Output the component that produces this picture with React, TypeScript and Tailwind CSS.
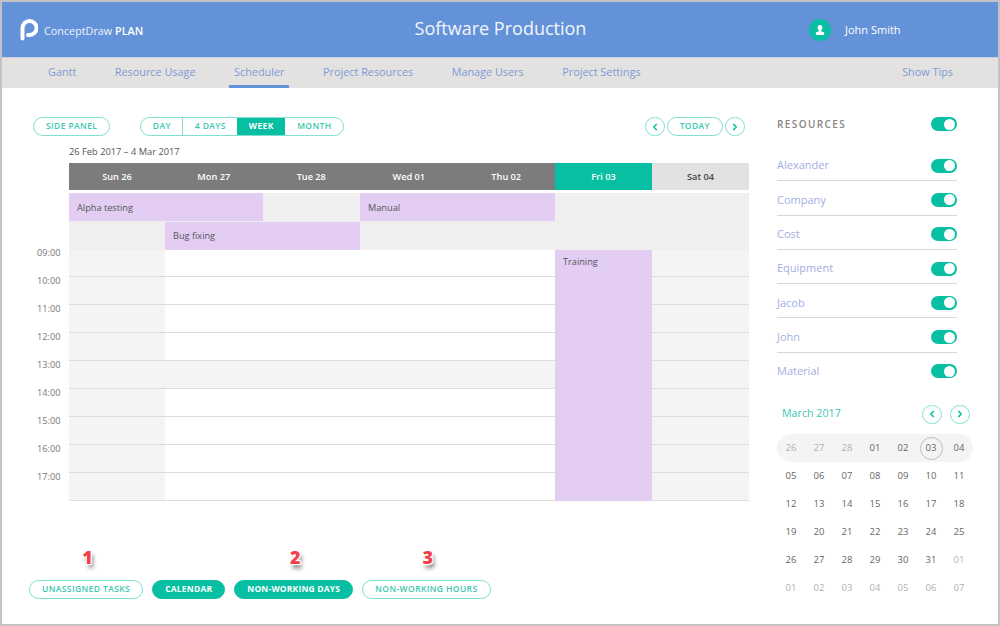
import { ChevronLeft, ChevronRight } from 'lucide-react'

const FONT = "font-['Open_Sans',sans-serif]"

const navItems = ['Gantt', 'Resource Usage', 'Scheduler', 'Project Resources', 'Manage Users', 'Project Settings']
const resources = ['Alexander', 'Company', 'Cost', 'Equipment', 'Jacob', 'John', 'Material']
const hours = ['09:00', '10:00', '11:00', '12:00', '13:00', '14:00', '15:00', '16:00', '17:00']
const days = ['Sun 26', 'Mon 27', 'Tue 28', 'Wed 01', 'Thu 02', 'Fri 03', 'Sat 04']

const calendar = [
  ['26', '27', '28', '01', '02', '03', '04'],
  ['05', '06', '07', '08', '09', '10', '11'],
  ['12', '13', '14', '15', '16', '17', '18'],
  ['19', '20', '21', '22', '23', '24', '25'],
  ['26', '27', '28', '29', '30', '31', '01'],
  ['01', '02', '03', '04', '05', '06', '07'],
]

function isMuted(row: number, col: number) {
  if (row === 0) return col < 3
  if (row === 4) return col === 6
  return row === 5
}

function Toggle() {
  return (
    <div className="flex h-[14px] w-[26px] items-center justify-end rounded-full bg-[#08bfa3] pr-[2px]">
      <div className="h-[11px] w-[11px] rounded-full bg-white" />
    </div>
  )
}

function RoundNav({ left }: { left?: boolean }) {
  return (
    <button className="flex h-[19px] w-[20px] items-center justify-center rounded-full border border-[#7fe0cf] text-[#08bfa3]">
      {left ? <ChevronLeft size={10} strokeWidth={4} /> : <ChevronRight size={10} strokeWidth={4} />}
    </button>
  )
}

function Pill({ label, active, badge }: { label: string; active?: boolean; badge?: string }) {
  return (
    <div className="relative">
      <button
        className={
          active
            ? 'block h-[19px] rounded-full border border-[#08bfa3] bg-[#08bfa3] px-3 text-[8.5px] font-bold tracking-[0.2px] text-white'
            : 'block h-[19px] rounded-full border border-[#7fe0cf] bg-white px-3 text-[8.5px] font-semibold tracking-[0.4px] text-[#3cc8b0]'
        }
      >
        {label}
      </button>
      {badge && (
        <span className="absolute -top-[35px] left-0 right-0 pl-[3px] text-center text-[18px] leading-[24px] font-extrabold text-[#f2404a] [text-shadow:1px_1px_0_#fff,-1px_1px_0_#fff,1px_-1px_0_#fff,-1px_-1px_0_#fff,0_0_3px_#fff,2px_4px_4px_#00000090]">
          {badge}
        </span>
      )}
    </div>
  )
}

function DayColumn({ weekend }: { weekend?: boolean }) {
  return (
    <div className="flex flex-col">
      {hours.map((h, i) => (
        <div
          key={h}
          className={[
            i === 0 ? 'h-[27px]' : 'h-[28px]',
            'border-b border-[#dcdcdc]',
            weekend || h === '13:00' ? 'bg-[#f4f4f4]' : 'bg-white',
          ].join(' ')}
        />
      ))}
    </div>
  )
}

export default function App() {
  return (
    <div className={`${FONT} flex h-[626px] w-[1000px] flex-col overflow-hidden border-2 border-[#c2c2c2] bg-white`}>
      {/* Header */}
      <header className="flex h-[55px] shrink-0 items-center bg-[#6492d8] text-white">
        <div className="flex w-[344px] items-center pl-[18px]">
          <svg width="18" height="22" viewBox="0 0 18 22" fill="none">
            <path d="M2.5 19.5V9a7 7 0 1 1 7 7H8" stroke="white" strokeWidth="4" strokeLinecap="round" />
          </svg>
          <span className="ml-[6px] mt-[3px] text-[10.8px] text-[#eef3fb]">
            ConceptDraw <b className="font-semibold text-white">PLAN</b>
          </span>
        </div>
        <div className="mb-[4px] w-[309px] text-center text-[18px] leading-none text-[#f3f6fc]">Software Production</div>
        <div className="ml-[154px] flex items-center">
          <div className="flex h-[22px] w-[22px] items-center justify-center rounded-full bg-[#08bfa3]">
            <svg width="12" height="12" viewBox="0 0 12 12" fill="white">
              <path d="M6 1a2.4 2.4 0 0 0-2.4 2.4c0 1.3.6 2.2 1.3 2.9v1L1.8 8.4V11h8.4V8.4L7.1 7.3v-1c.7-.7 1.3-1.6 1.3-2.9A2.4 2.4 0 0 0 6 1z" />
            </svg>
          </div>
          <span className="ml-[14px] mt-[2px] text-[11px]">John Smith</span>
        </div>
      </header>

      {/* Nav */}
      <nav className="flex h-[31px] shrink-0 items-stretch border-t border-[#c9d3e2] bg-[#e4e2e1] pl-[41px] pr-[40px] text-[10.85px] text-[#7c9bd6]">
        {navItems.map((item) => (
          <div
            key={item}
            className={
              item === 'Scheduler'
                ? 'mr-[28.5px] flex items-center border-b-[3px] border-[#6492d8] px-[5px] pt-[1px]'
                : 'mr-[28.5px] flex items-center border-b-[3px] border-transparent px-[5px] pt-[1px]'
            }
          >
            {item}
          </div>
        ))}
        <div className="ml-auto flex items-center border-b-[3px] border-transparent px-[5px] pt-[1px]">Show Tips</div>
      </nav>

      <div className="flex min-h-0 flex-1">
        {/* Main */}
        <main className="flex w-[775px] flex-col pl-[31px] pt-[29px]">
          <div className="flex h-[19px] items-center pr-[32px]">
            <Pill label="SIDE PANEL" />
            <div className="ml-[30px] flex h-[19px] items-stretch overflow-hidden rounded-full border border-[#7fe0cf] text-[8.5px] font-semibold tracking-[0.4px] text-[#3cc8b0]">
              <span className="flex w-[42px] items-center justify-center border-r border-[#7fe0cf]">DAY</span>
              <span className="flex w-[54px] items-center justify-center">4 DAYS</span>
              <span className="flex w-[48px] items-center justify-center bg-[#08bfa3] font-bold text-white">WEEK</span>
              <span className="flex w-[58px] items-center justify-center">MONTH</span>
            </div>
            <div className="ml-auto flex items-center gap-[2px]">
              <RoundNav left />
              <Pill label="TODAY" />
              <RoundNav />
            </div>
          </div>

          <div className="ml-[36px] mt-[8px] text-[9.3px] leading-[16px] text-[#555]">26 Feb 2017 – 4 Mar 2017</div>

          <div className="mt-[3px] flex">
            {/* Time labels */}
            <div className="w-[36px] shrink-0 pl-[4px] pt-[86px]">
              {hours.map((h) => (
                <div key={h} className="h-[28px] text-[9.2px] leading-[8px] text-[#777]">
                  {h}
                </div>
              ))}
            </div>

            <div className="w-[680px]">
              {/* Day header */}
              <div className="grid h-[27px] grid-cols-[96px_97.5px_97.5px_97.5px_97.5px_97px_97px] text-[9.2px] font-semibold">
                {days.map((d) => (
                  <div
                    key={d}
                    className={
                      d === 'Fri 03'
                        ? 'flex items-center justify-center bg-[#08bfa3] text-white'
                        : d === 'Sat 04'
                          ? 'flex items-center justify-center bg-[#e2e2e2] text-[#444]'
                          : 'flex items-center justify-center bg-[#7c7c7c] text-white'
                    }
                  >
                    {d}
                  </div>
                ))}
              </div>

              {/* All-day events */}
              <div className="mt-[3px] grid grid-cols-[96px_97.5px_97.5px_97.5px_97.5px_97px_97px] grid-rows-[29px_28px] bg-[#efefef] text-[9.2px] text-[#555]">
                <div className="col-span-2 col-start-1 row-start-1 mb-px flex items-center bg-[#e3cdf3] pl-[8px] pt-[1px]">Alpha testing</div>
                <div className="col-span-2 col-start-4 row-start-1 mb-px flex items-center bg-[#e3cdf3] pl-[8px] pt-[1px]">Manual</div>
                <div className="col-span-2 col-start-2 row-start-2 flex items-center bg-[#e3cdf3] pl-[8px]">Bug fixing</div>
              </div>

              {/* Hour grid */}
              <div className="grid grid-cols-[96px_97.5px_97.5px_97.5px_97.5px_97px_97px]">
                <DayColumn weekend />
                <DayColumn />
                <DayColumn />
                <DayColumn />
                <DayColumn />
                <div className="bg-[#e3cdf3] py-[6px] pl-[8px] text-[9.2px] leading-[12px] text-[#555]">Training</div>
                <DayColumn weekend />
              </div>
            </div>
          </div>

          {/* Bottom buttons */}
          <div className="-ml-[4px] mt-[79px] flex items-center gap-[9px]">
            <Pill label="UNASSIGNED TASKS" badge="1" />
            <Pill label="CALENDAR" active />
            <Pill label="NON-WORKING DAYS" active badge="2" />
            <Pill label="NON-WORKING HOURS" badge="3" />
          </div>
        </main>

        {/* Side panel */}
        <aside className="w-[196px] pt-[29px]">
          <div className="flex h-[14px] w-[180px] items-center justify-between">
            <span className="text-[10px] font-semibold tracking-[1.4px] text-[#8b8583]">RESOURCES</span>
            <Toggle />
          </div>
          <div className="mt-[16px] w-[180px]">
            {resources.map((r, i) => (
              <div
                key={r}
                className={
                  i === resources.length - 1
                    ? 'flex h-[34.3px] items-center justify-between border-b border-transparent pt-[4px] text-[11px] text-[#a3aee0]'
                    : 'flex h-[34.3px] items-center justify-between border-b border-[#d8d8d8] pt-[4px] text-[11px] text-[#a3aee0]'
                }
              >
                {r}
                <Toggle />
              </div>
            ))}
          </div>

          <div className="mt-[17px] flex h-[20px] w-[193px] items-center justify-between pl-[5px]">
            <span className="mb-[2px] text-[10.7px] text-[#3cc8b0]">March 2017</span>
            <div className="flex gap-[8px]">
              <RoundNav left />
              <RoundNav />
            </div>
          </div>

          <div className="mt-[10px]">
            {calendar.map((week, row) => (
              <div
                key={row}
                className={
                  row === 0
                    ? 'grid h-[28px] grid-cols-7 rounded-full bg-[#f4f4f4] text-[9.5px]'
                    : 'grid h-[28px] grid-cols-7 text-[9.5px]'
                }
              >
                {week.map((d, col) => (
                  <div key={col} className={isMuted(row, col) ? 'flex items-center justify-center text-[#b2b0b0]' : 'flex items-center justify-center text-[#666]'}>
                    {row === 0 && col === 5 ? (
                      <span className="flex h-[23px] w-[23px] items-center justify-center rounded-full border border-[#bdbdbd]">{d}</span>
                    ) : (
                      d
                    )}
                  </div>
                ))}
              </div>
            ))}
          </div>
        </aside>
      </div>
    </div>
  )
}
